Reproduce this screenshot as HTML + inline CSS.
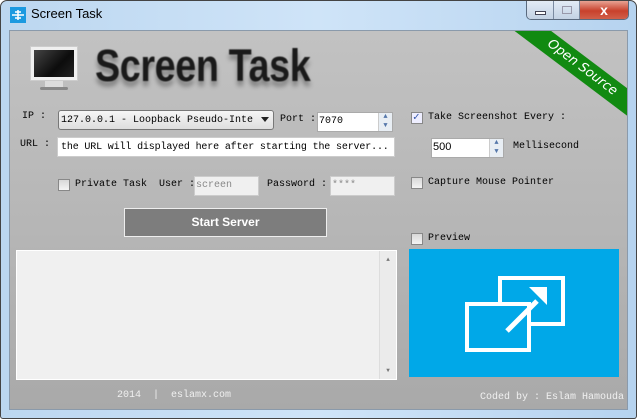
<!DOCTYPE html>
<html><head><style>
*{margin:0;padding:0;box-sizing:border-box}
body{width:637px;height:419px;overflow:hidden;background:#fff;font-family:"Liberation Mono","DejaVu Sans Mono",monospace;position:relative}
.frame{position:absolute;left:0;top:0;width:637px;height:419px;border:1px solid #444;border-radius:7px 7px 3px 3px;background:linear-gradient(90deg,#bcd7f0,#cfe4f8 50%,#b6d3ef);}
.client{position:absolute;left:9px;top:30px;width:619px;height:380px;background:linear-gradient(#c2c2c2,#b4b4b4 60%,#a9a9a9);border:1px solid #8a9aab;overflow:hidden}
.a{position:absolute}
.t{font-size:10px;color:#000;white-space:nowrap}
.inp{position:absolute;background:#fff;border:1px solid #aaa}
.cb{position:absolute;width:12px;height:12px;border:1px solid #888;background:linear-gradient(#d8d8d8,#f4f4f4)}
</style></head><body>
<div class="frame"></div>
<div class="a" style="left:10px;top:7px;width:16px;height:16px;background:#1c9ae0"><svg width="16" height="16"><path d="M2 8h12M8 3v10M5 5h6M5 11h6" stroke="#fff" stroke-width="1.5"/></svg></div>
<div class="a" style="left:31px;top:6px;font:13px 'Liberation Sans',sans-serif;color:#000">Screen Task</div>
<div class="a" style="left:526px;top:1px;width:103px;height:19px;border:1px solid #5a6a7e;border-top:none;border-radius:0 0 5px 5px;overflow:hidden;display:flex">
 <div style="width:27px;background:linear-gradient(#e2ebf5,#c3d2e4);border-right:1px solid #7a8aa0;position:relative"><div style="position:absolute;left:8px;top:10px;width:11px;height:4px;background:#fff;border:1px solid #445"></div></div>
 <div style="width:26px;background:linear-gradient(#e2ebf5,#c3d2e4);border-right:1px solid #7a8aa0;position:relative"><div style="position:absolute;left:8px;top:5px;width:10px;height:8px;border:1px solid #99a"></div></div>
 <div style="flex:1;background:linear-gradient(#e8a393,#c8412c 55%,#d0604a);color:#fff;font:bold 14px 'Liberation Sans',sans-serif;text-align:center;line-height:18px">x</div>
</div>
<div class="client">
 <div class="a" style="left:20px;top:15px;width:48px;height:35px;background:#f0f0f0;border:1px solid #ccc"><div style="margin:3px;height:27px;background:linear-gradient(135deg,#444,#0c0c0c 60%,#222)"></div></div>
 <div class="a" style="left:35px;top:50px;width:18px;height:6px;background:#ddd"></div>
 <div class="a" style="left:30px;top:56px;width:28px;height:3px;background:#888;border-radius:2px"></div>
 <div class="a" style="left:85px;top:9px;font:bold 45px 'Liberation Sans',sans-serif;color:#1a1a1a;transform:scaleX(0.84);transform-origin:left;text-shadow:0 5px 5px rgba(0,0,0,.35);letter-spacing:-0.5px;filter:blur(.5px)">Screen Task</div>
 <div class="a" style="left:482px;top:26px;width:180px;height:22px;background:#118a11;transform:rotate(37deg);transform-origin:center;color:#fff;font:italic 13px 'DejaVu Sans',sans-serif;text-align:center;line-height:22px">Open Source</div>

 <div class="a t" style="left:12px;top:80px">IP :</div>
 <div class="a" style="left:48px;top:79px;width:216px;height:20px;border:1px solid #777;border-radius:3px;background:linear-gradient(#f6f6f6,#dedede)"><span class="t" style="position:absolute;left:2px;top:4px">127.0.0.1 - Loopback Pseudo-Inte</span><span style="position:absolute;right:4px;top:6px;border:4px solid transparent;border-top:5px solid #222"></span></div>
 <div class="a t" style="left:270px;top:83px">Port :</div>
 <div class="inp" style="left:307px;top:81px;width:76px;height:20px"><span class="t" style="position:absolute;left:1px;top:3px">7070</span><div style="position:absolute;right:0;top:0;width:14px;height:18px;background:#e8eef4;border-left:1px solid #ccc;font-size:7px;color:#5577aa;text-align:center;line-height:9px">▲<br>▼</div></div>
 <div class="a t" style="left:10px;top:108px">URL :</div>
 <div class="inp" style="left:47px;top:106px;width:338px;height:20px;border-color:#ccc"><span class="t" style="position:absolute;left:3px;top:4px;letter-spacing:-0.15px">the URL will displayed here after starting the server...</span></div>
 <div class="cb" style="left:48px;top:148px"></div>
 <div class="a t" style="left:65px;top:148px">Private Task&nbsp; User :</div>
 <div class="inp" style="left:184px;top:145px;width:65px;height:20px;background:#f0f0f0;border-color:#ccc"><span class="t" style="position:absolute;left:1px;top:3px;color:#888">screen</span></div>
 <div class="a t" style="left:257px;top:148px">Password :</div>
 <div class="inp" style="left:320px;top:145px;width:65px;height:20px;background:#f0f0f0;border-color:#ccc"><span class="t" style="position:absolute;left:1px;top:3px;color:#888">****</span></div>
 <div class="a" style="left:114px;top:177px;width:203px;height:29px;background:#7d7d7d;border:1px solid #eee;color:#fff;font:bold 12px 'Liberation Sans',sans-serif;text-align:center;line-height:27px">Start Server</div>

 <div class="cb" style="left:401px;top:81px;background:#eef"><span style="position:absolute;left:1px;top:-3px;font-size:11px;color:#3355aa">✓</span></div>
 <div class="a t" style="left:418px;top:81px">Take Screenshot Every :</div>
 <div class="inp" style="left:421px;top:107px;width:73px;height:20px"><span class="t" style="position:absolute;left:1px;top:2px;font:11px 'Liberation Sans',sans-serif">500</span><div style="position:absolute;right:0;top:0;width:14px;height:18px;background:#e8eef4;border-left:1px solid #ccc;font-size:7px;color:#5577aa;text-align:center;line-height:9px">▲<br>▼</div></div>
 <div class="a t" style="left:503px;top:110px">Mellisecond</div>
 <div class="cb" style="left:401px;top:146px"></div>
 <div class="a t" style="left:418px;top:146px">Capture Mouse Pointer</div>
 <div class="cb" style="left:401px;top:202px"></div>
 <div class="a t" style="left:418px;top:202px">Preview</div>

 <div class="a" style="left:6px;top:219px;width:381px;height:130px;background:#f0f0f0;border:1px solid #fff"><div style="position:absolute;right:0;top:0;width:17px;height:128px;background:#ebebeb;border-left:1px solid #ddd;font-size:6px;color:#777;text-align:center"><div style="margin-top:5px">▲</div><div style="position:absolute;bottom:5px;width:100%">▼</div></div></div>
 <div class="a" style="left:399px;top:218px;width:210px;height:128px;background:#00a8e8">
  <svg width="210" height="128"><g fill="none" stroke="#fff" stroke-width="4"><path d="M91 53V29h63v46H122"/><rect x="58" y="55" width="62" height="46"/></g><path d="M98 82L128 52" stroke="#fff" stroke-width="5"/><path d="M120 38h18v18z" fill="#fff"/></svg>
 </div>
 <div class="a t" style="left:107px;top:359px;color:#f0f0f0;font-size:10px">2014 &nbsp;|&nbsp; eslamx.com</div>
 <div class="a t" style="right:3px;top:361px;color:#f0f0f0;font-size:10px">Coded by : Eslam Hamouda</div>
</div>
</body></html>
